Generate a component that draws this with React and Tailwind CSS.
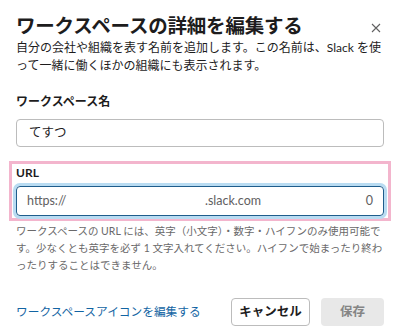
import React from 'react';

const FONT = "font-['Lato','Noto_Sans_CJK_JP',sans-serif]";

function CloseIcon() {
  return (
    <svg width="10" height="10" viewBox="0 0 10 10" className="text-[#616061]">
      <path d="M1 1 L9 9 M9 1 L1 9" stroke="currentColor" strokeWidth="1.1" fill="none" />
    </svg>
  );
}

export default function App() {
  return (
    <div className={`w-[400px] h-[333px] bg-white overflow-hidden text-[#1d1c1d] ${FONT}`}>
      <div className="px-4 pt-[14px] flex flex-col h-full">
        {/* header */}
        <div className="flex items-center justify-between h-6">
          <h1 className="text-[19.5px] font-bold leading-6 tracking-[-0.2px]">ワークスペースの詳細を編集する</h1>
          <div className="mr-[3px] mt-[3px]">
            <CloseIcon />
          </div>
        </div>

        <p className="mt-[1px] text-[12px] leading-[18px]">
          自分の会社や組織を表す名前を追加します。この名前は、Slack を使<br />
          って一緒に働くほかの組織にも表示されます。
        </p>

        <label className="mt-[18px] text-[12px] font-bold leading-[18px]">ワークスペース名</label>
        <div className="mt-2 h-[28px] border border-[#bcbcbc] rounded-[4px] flex items-center px-3 text-[12.5px]">
          てすつ
        </div>

        {/* highlighted URL field */}
        <div className="mt-[14px] -mx-[7px] border-[3px] border-[#f3b5cd] px-1 pt-[1px] pb-[2px]">
          <div className="text-[12px] font-bold leading-4">URL</div>
          <div className="mt-[5px] h-[30px] border border-[#1f5d8c] rounded-[4px] ring-[3px] ring-[#b9dcf2] flex items-center pl-[10px] pr-[10px] text-[12.5px] text-[#616061]">
            <span className="w-[178px]">https://</span>
            <span className="flex-1">.slack.com</span>
            <span>0</span>
          </div>
        </div>

        <p className="mt-[2px] text-[10.5px] leading-[17px] text-[#6a696a] whitespace-nowrap">
          ワークスペースの URL には、英字（小文字）・数字・ハイフンのみ使用可能で<br />
          す。少なくとも英字を必ず 1 文字入れてください。ハイフンで始まったり終わ<br />
          ったりすることはできません。
        </p>

        {/* footer */}
        <div className="mt-[24px] flex items-center">
          <a className="text-[11.7px] text-[#1264a3]">ワークスペースアイコンを編集する</a>
          <div className="ml-auto flex gap-[11px]">
            <button className="h-[28px] w-[79px] border border-[#bcbcbc] rounded-[4px] text-[12.5px] font-bold">
              キャンセル
            </button>
            <button className="h-[28px] w-[63px] rounded-[4px] bg-[#e8e8e8] text-[12.5px] font-bold text-[#858585]">
              保存
            </button>
          </div>
        </div>
      </div>
    </div>
  );
}
